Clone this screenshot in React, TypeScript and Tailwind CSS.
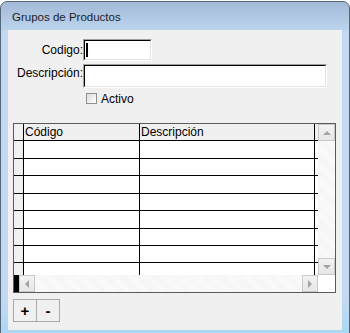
import React from "react";

function Arrow({ dir }: { dir: "up" | "down" | "left" | "right" }) {
  const pts =
    dir === "up"
      ? "0,4 4,0 8,4"
      : dir === "down"
      ? "0,0 8,0 4,4"
      : dir === "left"
      ? "4,0 4,8 0,4"
      : "0,0 0,8 4,4";
  const w = dir === "up" || dir === "down" ? 8 : 4;
  const h = dir === "up" || dir === "down" ? 4 : 8;
  return (
    <svg width={w} height={h} viewBox={`0 0 ${w} ${h}`}>
      <polygon points={pts} fill="#a3a3a3" />
    </svg>
  );
}

function ScrollBtn({ dir, className }: { dir: "up" | "down" | "left" | "right"; className: string }) {
  return (
    <div
      className={`${className} flex items-center justify-center border border-[#c9c9c9] bg-[linear-gradient(to_bottom,#f3f3f3,#e6e6e6)]`}
    >
      <Arrow dir={dir} />
    </div>
  );
}

export default function App() {
  const rows = [18, 17, 18, 17, 18, 17, 17, 12];
  return (
    <div className="w-[350px] h-[333px] bg-white overflow-hidden font-['Liberation_Sans',Arial,sans-serif] text-[12px] text-black">
      <div className="mt-[1px] w-[350px] h-[340px] rounded-t-[7px] border border-[#55657a] bg-[linear-gradient(to_bottom,#a2bad7,#bcd3ed_28px,#c3d9f1_29px,#c3d9f1_298px,#a9d7f3_332px)] flex flex-col">
        <div className="h-[28px] flex items-center pl-[11px] pt-[3px] text-[11.5px] text-[#1c1c1c]">
          Grupos de Productos
        </div>
        <div className="mx-[7px] h-[300px] bg-[#f0f0f0] flex flex-col">
          {/* Codigo */}
          <div className="mt-[9px] flex">
            <div className="w-[75px] text-right pt-[4px] leading-[14px]">Codigo:</div>
            <div className="w-[69px] h-[22px] border-t border-l border-[#a0a0a0] border-r border-b border-r-white border-b-white">
              <div className="h-full border-t border-l border-black border-r border-b border-r-[#e3e3e3] border-b-[#e3e3e3] bg-white flex items-center pl-[1px]">
                <div className="w-[2px] h-[14px] bg-black" />
              </div>
            </div>
          </div>
          {/* Descripcion */}
          <div className="mt-[3px] flex">
            <div className="w-[75px] text-right pt-[2px] leading-[14px]">Descripción:</div>
            <div className="w-[244px] h-[24px] border-t border-l border-[#a0a0a0] border-r border-b border-r-white border-b-white">
              <div className="h-full border-t border-l border-black border-r border-b border-r-[#e3e3e3] border-b-[#e3e3e3] bg-white" />
            </div>
          </div>
          {/* Activo */}
          <div className="mt-[4px] h-[14px] flex items-start pl-[78px]">
            <div className="mt-[1px] w-[11px] h-[11px] border border-[#8e8f8f] bg-[linear-gradient(135deg,#dcdcdc,#ffffff)]" />
            <span className="ml-[4px] leading-[14px] text-[12px]">Activo</span>
          </div>
          {/* Grid */}
          <div className="mt-[17px] ml-[5px] w-[323px] h-[170px] border border-[#5a5a5a] flex flex-col bg-white">
            <div className="h-[151px] flex">
              <div className="w-[304px] flex flex-col">
                {/* header */}
                <div className="h-[17px] flex border-b border-black bg-[#f0f0f0]">
                  <div className="w-[10px] border-r border-black" />
                  <div className="w-[116px] border-r border-black pl-[1px] leading-[16px]">Código</div>
                  <div className="w-[175px] border-r border-black pl-[1px] leading-[16px]">Descripción</div>
                  <div className="flex-1" />
                </div>
                {rows.map((h, i) => (
                  <div
                    key={i}
                    className={`flex ${i < rows.length - 1 ? "border-b border-black" : ""}`}
                    style={{ height: h }}
                  >
                    <div className="w-[10px] border-r border-black bg-[#f0f0f0]" />
                    <div className="w-[116px] border-r border-black" />
                    <div className="w-[175px] border-r border-black" />
                    <div className="flex-1" />
                  </div>
                ))}
              </div>
              <div className="w-[17px] flex flex-col bg-[#f7f7f7]">
                <ScrollBtn dir="up" className="h-[17px]" />
                <div className="flex-1 bg-[repeating-linear-gradient(45deg,#f4f4f4_0px,#f4f4f4_1px,#fbfbfb_1px,#fbfbfb_2px)]" />
                <ScrollBtn dir="down" className="h-[17px]" />
              </div>
            </div>
            <div className="h-[17px] flex">
              <div className="w-[5px] bg-black" />
              <ScrollBtn dir="left" className="w-[16px]" />
              <div className="flex-1 bg-[repeating-linear-gradient(45deg,#f4f4f4_0px,#f4f4f4_1px,#fbfbfb_1px,#fbfbfb_2px)]" />
              <ScrollBtn dir="right" className="w-[16px]" />
              <div className="w-[17px] bg-white" />
            </div>
          </div>
          {/* Buttons */}
          <div className="mt-[6px] ml-[5px] flex">
            <div className="w-[24px] h-[23px] border border-[#a9a9a9] bg-[#f0f0f0] flex items-center justify-center font-bold text-[15px] leading-none">
              +
            </div>
            <div className="w-[23px] h-[23px] border border-l-0 border-[#a9a9a9] bg-[#f0f0f0] flex items-center justify-center font-bold text-[15px] leading-none">
              -
            </div>
          </div>
        </div>
      </div>
    </div>
  );
}
